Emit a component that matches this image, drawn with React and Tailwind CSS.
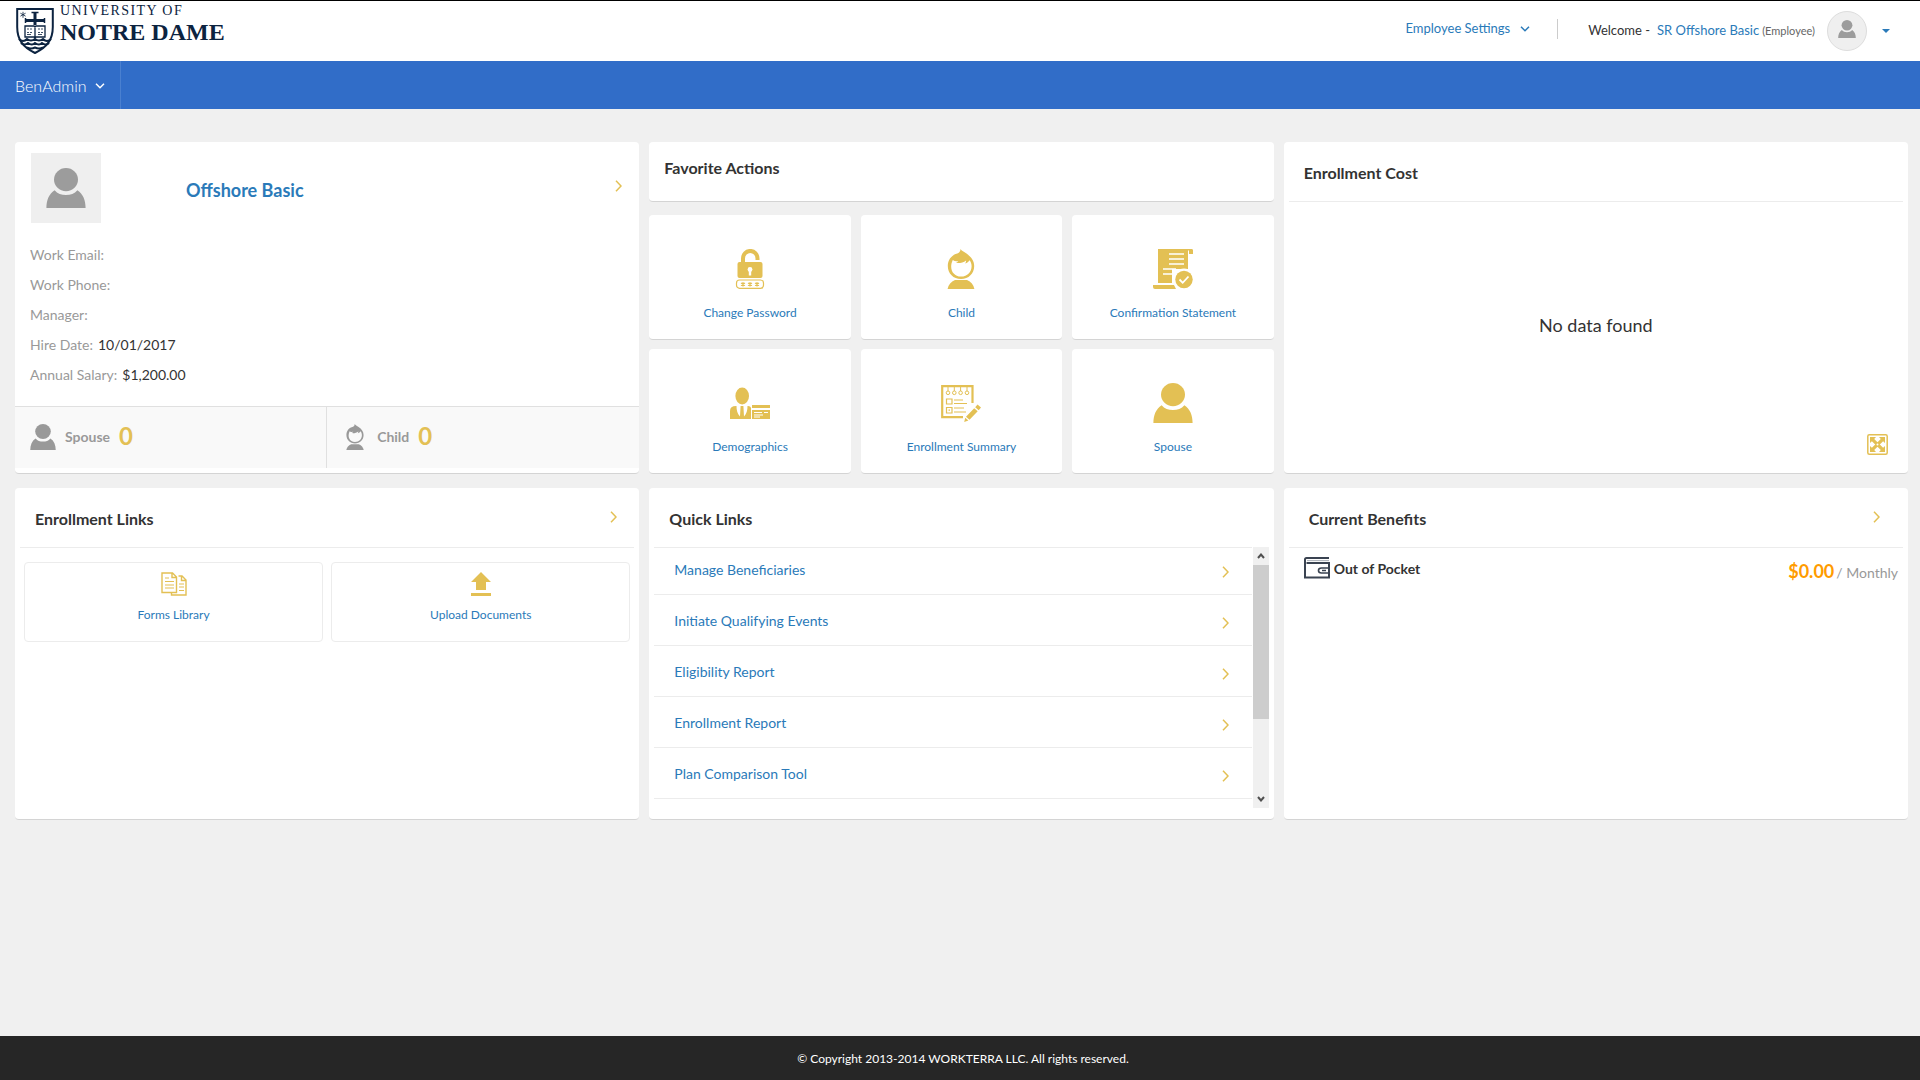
const FAVORITES = [
  { label: 'Change Password', icon: LockIcon },
  { label: 'Child', icon: ChildIcon },
  { label: 'Confirmation Statement', icon: StatementIcon },
  { label: 'Demographics', icon: DemographicsIcon },
  { label: 'Enrollment Summary', icon: SummaryIcon },
  { label: 'Spouse', icon: PersonIcon },
]

const QUICK_LINKS = [
  'Manage Beneficiaries',
  'Initiate Qualifying Events',
  'Eligibility Report',
  'Enrollment Report',
  'Plan Comparison Tool',
]

const DETAILS = [
  { label: 'Work Email:', value: '' },
  { label: 'Work Phone:', value: '' },
  { label: 'Manager:', value: '' },
  { label: 'Hire Date:', value: '10/01/2017' },
  { label: 'Annual Salary:', value: '$1,200.00' },
]

const CARD = 'bg-white rounded border-b border-[#d4d4d4]'

function PersonIcon({ className = 'w-10 h-10' }) {
  return (
    <svg className={className} viewBox="0 0 40 40" fill="currentColor">
      <ellipse cx="20" cy="11.6" rx="12" ry="11.6" />
      <path d="M8.6 22.2C3 26 .4 32 .4 40h39.2c0-8-2.600-14-8.200-17.800C28.500 25.600 24.600 27 20 27s-8.500-1.400-11.400-4.800Z" />
    </svg>
  )
}

function ChildIcon({ className = 'w-10 h-10' }) {
  return (
    <svg className={className} viewBox="0 0 40 40" fill="currentColor">
      <path
        fillRule="evenodd"
        d="M19.500 0c1 2 3.500 2.600 6 4.600C30 7.600 33.200 11.600 33.200 17c0 7.600-5.600 13-13.200 13S6.800 24.600 6.800 17C6.800 10.500 11 5.600 17 4.300 18.600 3.400 19.400 2 19.500 0Zm-7.700 11C7.800 19 11.500 27.600 20 27.600c6.500 0 10.600-4.800 10.600-10.400 0-2.400-.8-4.400-2-6-1 1.600-2.400 2.600-4.400 3.200.7-.9 1-1.900.9-3-2.800 2.400-6.500 3-10.200 2.600 1-.4 1.800-1 2.400-1.900-2.200.5-4 .1-5.500-1.100Z"
      />
      <path d="M14 31h12c4 1.500 6.600 5 7.400 9H6.600c.8-4 3.400-7.500 7.400-9Z" />
    </svg>
  )
}

function LockIcon() {
  return (
    <svg className="w-10 h-10" viewBox="0 0 40 40">
      <path d="M13 14V9.500a7 7.300 0 0 1 14.500 0V11" fill="none" stroke="currentColor" strokeWidth="4" />
      <rect x="7.500" y="13" width="25" height="16" rx="2" fill="currentColor" />
      <circle cx="20" cy="20.500" r="2.400" fill="#fff" />
      <path d="M18.800 20h2.400v6.500h-2.400Z" fill="#fff" />
      <rect x="6.500" y="31" width="27" height="8.300" rx="3" fill="none" stroke="currentColor" strokeWidth="1.200" />
      <path
        d="M13 33v4.400m-2-3.400 4 2.400m0-2.400-4 2.400M20 33v4.400m-2-3.400 4 2.400m0-2.400-4 2.400M27 33v4.400m-2-3.400 4 2.400m0-2.400-4 2.400"
        stroke="currentColor"
        strokeWidth="1.200"
      />
    </svg>
  )
}

function StatementIcon() {
  return (
    <svg className="w-10 h-10" viewBox="0 0 40 40" fill="currentColor">
      <path d="M5 0h34q1 0 1 1.500V5h-4V1.500h-1V20H5Z" />
      <path d="M5 19h14v15H5ZM0 36h21l2 4H2q-2 0-2-2Z" />
      <path d="M16 5h15M16 10h15M16 15h15M10 20h13M10 25h9" stroke="#fff" strokeWidth="1.600" />
      <circle cx="31" cy="30.500" r="11" fill="#fff" />
      <circle cx="31" cy="30.500" r="8.700" />
      <path d="m26.500 30.500 3.200 3.300 5.800-6.300" fill="none" stroke="#fff" strokeWidth="1.800" />
    </svg>
  )
}

function DemographicsIcon() {
  return (
    <svg className="w-10 h-10" viewBox="0 0 40 40" fill="currentColor">
      <ellipse cx="12.200" cy="13" rx="6.800" ry="8.500" />
      <path d="M0 36V28q0-5 6-5h12q3 0 3 2.500V36Z" />
      <path d="M6.500 23c0 4 .8 8 3.500 10.500L10.600 23ZM17.500 23c0 4-.8 8-3.500 10.500L13.400 23Z" fill="#fff" />
      <path d="M22 22h18v3H22ZM22 27h18v9H22Z" />
      <path d="M24 29.500h8m2 0h4M24 32h9M24 34h6" stroke="#fff" strokeWidth="1.100" />
    </svg>
  )
}

function SummaryIcon() {
  return (
    <svg className="w-10 h-10" viewBox="0 0 40 40" fill="none" stroke="currentColor">
      <path d="M31.500 20V3.200H1.200v31H22" strokeWidth="2.200" />
      <path d="M7 4v4M13.300 4v4M19.600 4v4M26 4v4" />
      <path d="M5.200 9.800a1.800 1.800 0 1 0 3.600 0 1.800 1.800 0 1 0-3.600 0M11.500 9.800a1.800 1.800 0 1 0 3.600 0 1.800 1.800 0 1 0-3.600 0M17.800 9.800a1.800 1.800 0 1 0 3.600 0 1.800 1.800 0 1 0-3.600 0M24.200 9.800a1.800 1.800 0 1 0 3.600 0 1.800 1.800 0 1 0-3.600 0" />
      <path d="M5.500 16h5.500v5H5.500ZM5.500 24.500h5.500v5.500H5.500ZM7.500 27.200h1.500" strokeWidth="1.200" />
      <path d="M13 17h9M13 20.500h13M13 25h10M13 29h12" strokeWidth="1.200" />
      <path
        d="m36.500 21.500 3.500 3-2.300 2.800-3.500-3ZM33.200 25.200l3.500 3-8.200 8.600-3.500-3ZM24.200 34.800l3.200 2.800-4.200 1.400Z"
        fill="currentColor"
        stroke="none"
      />
    </svg>
  )
}

function FormsIcon() {
  return (
    <svg className="w-[26px] h-6" viewBox="0 0 26 24" fill="none" stroke="currentColor" strokeWidth="1.400">
      <path d="M1 1h10.500L15.500 5v15.500H1ZM11 1v4.500h4.500" />
      <path d="M17.500 4h3.500l4 4v15H10.500v-2M20.500 4v4.500H25" />
      <path d="M4 6h4M4 9.500h9M4 13h9M4 16h9M18 12h5M18 15h5M18 18.500h5" strokeWidth="1.200" />
    </svg>
  )
}

function UploadIcon() {
  return (
    <svg className="w-5 h-6" viewBox="0 0 20 24" fill="currentColor">
      <path d="m10 0 10 10h-5v8H5v-8H0ZM0 21h20v3H0Z" />
    </svg>
  )
}

function ExpandIcon() {
  return (
    <svg className="w-[21px] h-[21px]" viewBox="0 0 21 21" fill="currentColor">
      <rect x=".8" y=".8" width="19.400" height="19.400" rx="1.500" fill="none" stroke="currentColor" strokeWidth="1.500" />
      <path d="M3 3h6L7.200 4.900 16.100 13.800 18 12v6h-6l1.800-1.900L4.900 7.200 3 9Z" />
      <path d="M18 3v6l-1.900-1.800-8.900 8.900L9 18H3v-6l1.900 1.800 8.900-8.900L12 3Z" />
      <circle cx="10.500" cy="10.500" r="1" fill="#fff" />
    </svg>
  )
}

function WalletIcon() {
  return (
    <svg className="w-[26px] h-[22px]" viewBox="0 0 26 22" fill="none" stroke="#3a4351" strokeWidth="2">
      <path d="M25 1H2.500A1.500 1.500 0 0 0 1 2.500V20.500h24V6H2.500" />
      <path d="M3 3.600h22" stroke="#aab0b8" strokeWidth="1" />
      <path d="M25 11h-7.500q-3 0-3 2.500t3 2.500H25M18 13.500h4" strokeWidth="1.600" />
    </svg>
  )
}

function ChevronRight() {
  return (
    <svg className="w-[7px] h-3" viewBox="0 0 7 12" fill="none" stroke="#e3c054" strokeWidth="1.500">
      <path d="m1 .8 5 5.200-5 5.200" />
    </svg>
  )
}

function ChevronDown() {
  return (
    <svg className="w-[10px] h-[6px]" viewBox="0 0 10 6" fill="none" stroke="currentColor" strokeWidth="1.500">
      <path d="m1 .8 4 4 4-4" />
    </svg>
  )
}

function Shield() {
  return (
    <svg className="w-[38px] h-[46px]" viewBox="0 0 38 46" fill="none" stroke="#0c2340">
      <path d="M1.200 1h35.600v18C36.800 32 31 39 19 45 7 39 1.200 32 1.200 19Z" strokeWidth="2" />
      <path d="M19 4v13M9 12.500h20" strokeWidth="3" />
      <path d="M15.500 4.500h7M9.500 10v5M28.500 10v5" strokeWidth="1.500" />
      <path d="M7 3.800v6M4.400 5.200l5.200 3M9.600 5.200l-5.200 3" strokeWidth=".8" />
      <path d="M9 18h9l1 1 1-1h9v11h-9l-1 1-1-1H9ZM19 18v12" strokeWidth="1.300" />
      <path d="M11 21h2m1 0h2M11 24.500h2m1 0h2M22 21h2m1 0h2M22 24.500h2m1 0h2M11 26.500h4M22 26.500h4" strokeWidth=".8" />
      <path
        d="M3 31q4 4 8 0 4 3 8 0 4 3 8 0 4 4 8 0M5 35q3 3 7 0 4 3 7 0 4 3 7 0 4 3 7 0M11 39.500q4 2 8 0 4 2 8 0"
        strokeWidth="2"
      />
    </svg>
  )
}

function Header() {
  return (
    <header className="h-[61px] border-t border-black bg-white flex items-start justify-between pl-4 pr-[30px]">
      <a href="#home" className="flex items-end gap-[6px] pt-[7px] text-[#0c2340]">
        <Shield />
        <span className="self-start -mt-[5px] font-['Liberation_Serif',serif] whitespace-nowrap">
          <span className="block text-sm leading-4 tracking-widest">UNIVERSITY OF</span>
          <span className="block text-2xl leading-[26px] font-bold">NOTRE DAME</span>
        </span>
      </a>
      <div className="flex items-center h-[60px]">
        <button type="button" className="flex items-center gap-[10px] pr-[27px] pb-1 text-[13px] text-[#2a7ab9]">
          Employee Settings
          <ChevronDown />
        </button>
        <div className="h-5 mb-1 border-l border-[#ccc]" />
        <div className="flex items-center pl-[30px] text-[13px]">
          <span>Welcome -</span>
          <a href="#profile" className="pl-[7px] text-[#2a7ab9]">SR Offshore Basic</a>
          <span className="pl-[3px] text-[11px] text-[#666]">(Employee)</span>
        </div>
        <span className="ml-3 w-10 h-10 rounded-full border border-[#ddd] bg-[#efefef] text-[#9c9c9c] flex items-center justify-center pb-1">
          <PersonIcon className="w-[18px] h-[18px]" />
        </span>
        <button type="button" aria-label="Account menu" className="ml-[15px] text-[#2a7ab9]">
          <svg className="w-2 h-1" viewBox="0 0 8 4" fill="currentColor">
            <path d="M0 0h8L4 4Z" />
          </svg>
        </button>
      </div>
    </header>
  )
}

function CardHeader({ title, padding = 'px-4', action }) {
  return (
    <div className={`mx-[5px] h-[60px] flex justify-between border-b border-[#ececec] ${padding}`}>
      <h2 className="pt-[21px] text-base leading-5 font-bold">{title}</h2>
      {action && (
        <button type="button" aria-label={`Open ${title}`} className="self-start pt-[23px]">
          <ChevronRight />
        </button>
      )}
    </div>
  )
}

function ProfileCard() {
  return (
    <section className={`${CARD} flex flex-col pb-[5px]`}>
      <div className="flex items-start pt-[11px] pl-4 pr-[17px]">
        <div className="w-[70px] h-[70px] bg-[#efefef] text-[#9c9c9c] flex items-center justify-center">
          <PersonIcon />
        </div>
        <h1 className="pt-[25px] pl-[85px] text-lg leading-6 font-bold text-[#2a7ab9]">Offshore Basic</h1>
        <button type="button" aria-label="Open profile" className="ml-auto pt-[27px]">
          <ChevronRight />
        </button>
      </div>
      <dl className="pt-[17px] pl-[15px] text-sm">
        {DETAILS.map(d => (
          <div key={d.label} className="flex gap-[5px] leading-[30px]">
            <dt className="text-[#999]">{d.label}</dt>
            <dd>{d.value}</dd>
          </div>
        ))}
      </dl>
      <div className="mt-auto h-[62px] grid grid-cols-2 border-t border-[#e0e0e0] bg-[#f9f9f9] text-sm font-bold text-[#999]">
        <div className="flex items-center pl-[15px] pb-0.5 border-r border-[#e0e0e0]">
          <PersonIcon className="w-[26px] h-[26px]" />
          <span className="flex items-center gap-[9px] pl-[9px]">
            Spouse <span className="pb-0.5 text-2xl text-[#e3c054]">0</span>
          </span>
        </div>
        <div className="flex items-center pl-[15px] pb-0.5">
          <ChildIcon className="w-[26px] h-[26px]" />
          <span className="flex items-center gap-[9px] pl-[9px]">
            Child <span className="pb-0.5 text-2xl text-[#e3c054]">0</span>
          </span>
        </div>
      </div>
    </section>
  )
}

function FavoriteActions() {
  return (
    <section className="flex flex-col gap-[13px]">
      <div className={`${CARD} h-[60px] px-[15px] pt-4`}>
        <h2 className="text-base leading-5 font-bold">Favorite Actions</h2>
      </div>
      <div className="grow grid grid-cols-3 gap-x-[10px] gap-y-[9px]">
        {FAVORITES.map(({ label, icon: Icon }) => (
          <a key={label} href="#action" className={`${CARD} flex flex-col items-center pt-[34px] text-xs text-[#2a7ab9]`}>
            <span className="text-[#e3c054]"><Icon /></span>
            <span className="pt-4 leading-4">{label}</span>
          </a>
        ))}
      </div>
    </section>
  )
}

function EnrollmentCost() {
  return (
    <section className={`${CARD} flex flex-col`}>
      <CardHeader title="Enrollment Cost" padding="px-[15px]" />
      <p className="pt-[109px] text-center text-lg leading-7">No data found</p>
      <button type="button" aria-label="Expand" className="mt-auto mb-[18px] mr-5 self-end text-[#e3c054]">
        <ExpandIcon />
      </button>
    </section>
  )
}

function EnrollmentLinks() {
  const tile = 'h-20 flex flex-col items-center pt-[9px] rounded border border-[#ececec] text-xs text-[#2a7ab9]'
  return (
    <section className={CARD}>
      <CardHeader title="Enrollment Links" padding="pl-[15px] pr-[17px]" action />
      <div className="grid grid-cols-2 gap-2 px-[9px] pt-[14px]">
        <a href="#forms" className={tile}>
          <span className="text-[#e3c054]"><FormsIcon /></span>
          <span className="pt-[11px] leading-4">Forms Library</span>
        </a>
        <a href="#upload" className={tile}>
          <span className="text-[#e3c054]"><UploadIcon /></span>
          <span className="pt-[11px] leading-4">Upload Documents</span>
        </a>
      </div>
    </section>
  )
}

function ScrollBar() {
  return (
    <div className="w-4 flex flex-col items-center bg-[#f0f0f0] text-[#505050]">
      <div className="h-[18px] flex items-center">
        <svg className="w-2 h-[6px]" viewBox="0 0 8 6" fill="none" stroke="currentColor" strokeWidth="2">
          <path d="m1 5 3-3.500L7 5" />
        </svg>
      </div>
      <div className="w-full h-[154px] bg-[#cdcdcd]" />
      <div className="mt-auto h-[18px] flex items-center">
        <svg className="w-2 h-[6px]" viewBox="0 0 8 6" fill="none" stroke="currentColor" strokeWidth="2">
          <path d="m1 1 3 3.500L7 1" />
        </svg>
      </div>
    </div>
  )
}

function QuickLinks() {
  return (
    <section className={CARD}>
      <div className="h-[59px] px-5">
        <h2 className="pt-[21px] text-base leading-5 font-bold">Quick Links</h2>
      </div>
      <div className="mx-[5px] h-[261px] flex gap-px overflow-hidden">
        <ul className="grow border-t border-[#ececec] text-sm">
          {QUICK_LINKS.map((label, i) => (
            <li key={label} className={i === 0 ? 'border-b border-[#ececec]' : 'border-b border-[#ececec] pt-1'}>
              <a href="#link" className="h-[46px] flex items-center justify-between pl-5 pr-[23px] text-[#2a7ab9]">
                <span className="pb-0.5">{label}</span>
                <span className="pt-0.5"><ChevronRight /></span>
              </a>
            </li>
          ))}
        </ul>
        <ScrollBar />
      </div>
    </section>
  )
}

function CurrentBenefits() {
  return (
    <section className={CARD}>
      <CardHeader title="Current Benefits" padding="pl-5 pr-[23px]" action />
      <div className="flex items-start justify-between pl-5 pr-[10px] pt-[9px]">
        <div className="flex items-start gap-1 text-sm leading-6 font-bold">
          <WalletIcon />
          Out of Pocket
        </div>
        <p className="flex items-baseline gap-[2px] text-sm leading-7 text-[#999]">
          <span className="text-lg leading-7 font-bold text-[#ff9c00]">$0.00</span>
          <span>/ Monthly</span>
        </p>
      </div>
    </section>
  )
}

export default function App() {
  return (
    <div className="min-h-screen flex flex-col bg-[#f0f0f0] font-[Lato,sans-serif] text-[#333]">
      <Header />
      <nav className="h-12 flex bg-[#316dc8]">
        <button type="button" className="flex items-center gap-2 px-[15px] pt-0.5 border-r border-[#4a80d0] font-light text-white">
          BenAdmin
          <ChevronDown />
        </button>
      </nav>
      <main className="grow grid grid-cols-3 auto-rows-[minmax(332px,auto)] content-start gap-x-[10px] gap-y-[14px] pt-[33px] pl-[15px] pr-3 pb-8">
        <ProfileCard />
        <FavoriteActions />
        <EnrollmentCost />
        <EnrollmentLinks />
        <QuickLinks />
        <CurrentBenefits />
      </main>
      <footer className="h-11 flex items-center justify-center pt-0.5 pl-[6px] bg-[#262626] text-xs text-white">
        © Copyright 2013-2014 WORKTERRA LLC. All rights reserved.
      </footer>
    </div>
  )
}
